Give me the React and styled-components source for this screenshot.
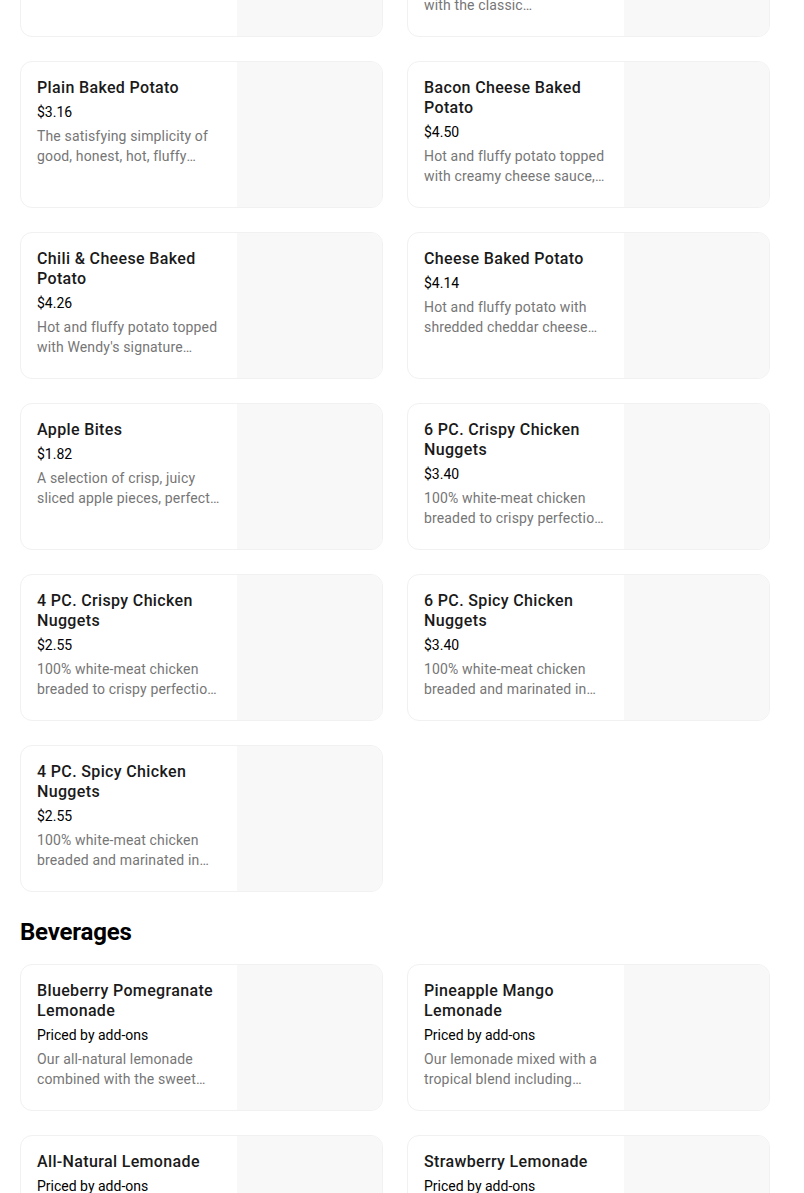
import React from 'react';
import styled, { createGlobalStyle } from 'styled-components';

const Global = createGlobalStyle`
    body {
        margin: 0;
        background: #ffffff;
        font-family: Roboto, 'Liberation Sans', sans-serif;
        color: #000000;
    }
`

const Page = styled.div`
    margin-top: -110px;
    padding: 0 34px 40px 20px;
`

const Section = styled.section`
    padding-top: ${props => (props.first ? '0' : '24px')};
`

const SectionTitle = styled.h2`
    margin: 0 0 16px 0;
    font-size: 24px;
    line-height: 32px;
    font-weight: 700;
    letter-spacing: -0.2px;
`

const Grid = styled.div`
    display: grid;
    grid-template-columns: 363px 363px;
    column-gap: 24px;
    row-gap: 24px;
`

const Card = styled.div`
    display: flex;
    height: 147px;
    box-sizing: border-box;
    border: 1px solid #f1f1f1;
    border-radius: 12px;
    overflow: hidden;
    background: #ffffff;
`

const Info = styled.div`
    flex: 1;
    min-width: 0;
    padding: 16px;
`

const Name = styled.div`
    font-size: 16px;
    line-height: 20px;
    font-weight: 500;
    letter-spacing: 0.35px;
    color: #1a1a1a;
`

const Price = styled.div`
    margin-top: 4px;
    font-size: 14px;
    line-height: 20px;
    color: #000000;
`

const Desc = styled.div`
    margin-top: 4px;
    font-size: 14px;
    line-height: 20px;
    letter-spacing: 0.15px;
    color: #767676;
    display: -webkit-box;
    -webkit-line-clamp: 2;
    -webkit-box-orient: vertical;
    overflow: hidden;
`

const Thumb = styled.div`
    width: 145px;
    flex-shrink: 0;
    background: #f8f8f8;
`

const sides = [
    { name: 'Sour Cream Potato', price: '$3.84', desc: 'Hot and fluffy potato topped with sour cream and chives.' },
    { name: 'Broccoli Cheese Baked Potato', price: '$4.14', desc: 'Hot and fluffy potato topped with the classic accompaniment of broccoli and cheese sauce.' },
    { name: 'Plain Baked Potato', price: '$3.16', desc: 'The satisfying simplicity of good, honest, hot, fluffy baked potato. Just the way you like it.' },
    { name: 'Bacon Cheese Baked Potato', price: '$4.50', desc: 'Hot and fluffy potato topped with creamy cheese sauce, and crispy Applewood smoked bacon.' },
    { name: 'Chili & Cheese Baked Potato', price: '$4.26', desc: "Hot and fluffy potato topped with Wendy's signature homemade chili and shredded cheddar." },
    { name: 'Cheese Baked Potato', price: '$4.14', desc: 'Hot and fluffy potato with shredded cheddar cheese and warm, creamy cheese sauce.' },
    { name: 'Apple Bites', price: '$1.82', desc: 'A selection of crisp, juicy sliced apple pieces, perfect for a sweet and healthy side.' },
    { name: '6 PC. Crispy Chicken Nuggets', price: '$3.40', desc: '100% white-meat chicken breaded to crispy perfection and served with your choice of sauce.' },
    { name: '4 PC. Crispy Chicken Nuggets', price: '$2.55', desc: '100% white-meat chicken breaded to crispy perfection and served with your choice of sauce.' },
    { name: '6 PC. Spicy Chicken Nuggets', price: '$3.40', desc: '100% white-meat chicken breaded and marinated in spicy peppers and seasonings.' },
    { name: '4 PC. Spicy Chicken Nuggets', price: '$2.55', desc: '100% white-meat chicken breaded and marinated in spicy peppers and seasonings.' },
]

const beverages = [
    { name: 'Blueberry Pomegranate Lemonade', price: 'Priced by add-ons', desc: 'Our all-natural lemonade combined with the sweet taste of blueberry and pomegranate.' },
    { name: 'Pineapple Mango Lemonade', price: 'Priced by add-ons', desc: 'Our lemonade mixed with a tropical blend including pineapple and mango flavors.' },
    { name: 'All-Natural Lemonade', price: 'Priced by add-ons', desc: 'Made with real lemon juice and real sugar for a refreshing taste.' },
    { name: 'Strawberry Lemonade', price: 'Priced by add-ons', desc: 'Our all-natural lemonade with real strawberries.' },
]

function ItemCard({ item }) {
    return (
        <Card>
            <Info>
                <Name>{item.name}</Name>
                <Price>{item.price}</Price>
                <Desc>{item.desc}</Desc>
            </Info>
            <Thumb />
        </Card>
    )
}

export default function App() {
    return (
        <Page>
            <Global />
            <Section first>
                <Grid>
                    {sides.map(item => <ItemCard key={item.name} item={item} />)}
                </Grid>
            </Section>
            <Section>
                <SectionTitle>Beverages</SectionTitle>
                <Grid>
                    {beverages.map(item => <ItemCard key={item.name} item={item} />)}
                </Grid>
            </Section>
        </Page>
    )
}
